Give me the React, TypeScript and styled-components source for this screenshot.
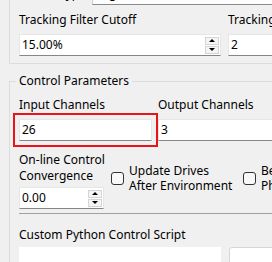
import styled, { createGlobalStyle } from 'styled-components';

const GlobalStyle = createGlobalStyle`
  html, body {
    margin: 0;
    padding: 0;
    background: #f0f0f0;
  }
  body {
    font-family: "Noto Sans", "Liberation Sans", sans-serif;
    font-size: 12px;
    line-height: 16px;
    color: #000;
  }
`;

const Page = styled.div`
  width: 272px;
  height: 262px;
  overflow: hidden;
  padding-left: 9px;
  box-sizing: border-box;
`;

const FilterGroup = styled.div`
  display: flow-root;
  width: 300px;
  height: 64px;
  box-sizing: border-box;
  border-left: 1px solid #dcdcdc;
  border-bottom: 1px solid #dcdcdc;
  padding-left: 9px;
`;

const ClippedRow = styled.div`
  display: flex;
  align-items: center;
  gap: 6px;
  height: 22px;
  margin-top: -17px;
`;

const RightLabel = styled.div`
  width: 67px;
  text-align: right;
  white-space: nowrap;
`;

const Combo = styled.div`
  flex: 1;
  height: 22px;
  box-sizing: border-box;
  background: #fdfdfd;
  border: 1px solid #d0d0d0;
  border-bottom-color: #8a8a8a;
  padding-left: 4px;
  display: flex;
  align-items: center;
`;

const FieldGrid = styled.div<{ $cols: string; $gap: number; $top: number }>`
  display: grid;
  grid-template-columns: ${(p) => p.$cols};
  column-gap: ${(p) => p.$gap}px;
  row-gap: 6px;
  margin-top: ${(p) => p.$top}px;
  white-space: nowrap;
`;

const Label = styled.div`
  height: 16px;
  white-space: nowrap;
`;

const Field = styled.div<{ $highlight?: boolean }>`
  height: 22px;
  box-sizing: border-box;
  background: #fff;
  border: 1px solid #e6e6e6;
  border-bottom-color: #868686;
  padding-left: 2px;
  display: flex;
  align-items: center;
  outline: ${(p) => (p.$highlight ? '2px solid #e8141c' : 'none')};
  outline-offset: 4px;
`;

const FieldText = styled.span`
  flex: 1;
`;

const SpinButtons = styled.div`
  display: flex;
  flex-direction: column;
  gap: 1px;
  margin-right: 1px;
`;

const SpinButton = styled.div`
  width: 14px;
  height: 8px;
  box-sizing: border-box;
  background: #f5f5f5;
  border: 1px solid #d4d4d4;
  display: flex;
  align-items: center;
  justify-content: center;
`;

const Arrow = styled.span<{ $down?: boolean }>`
  width: 0;
  height: 0;
  border-left: 3px solid transparent;
  border-right: 3px solid transparent;
  ${(p) => (p.$down ? 'border-top: 3px solid #000;' : 'border-bottom: 3px solid #000;')}
`;

const ParamGroup = styled.fieldset`
  width: 300px;
  margin: 9px 0 0;
  padding: 0 0 0 9px;
  border: 1px solid #dcdcdc;
  border-right: none;
  border-bottom: none;
  min-width: 0;
  box-sizing: border-box;
`;

const Legend = styled.legend`
  padding: 0 3px;
  margin-left: -3px;
  line-height: 16px;
`;

const ConvergenceRow = styled.div`
  display: grid;
  grid-template-columns: 85px 125px 1fr;
  column-gap: 7px;
  margin-top: 11px;
  white-space: nowrap;
`;

const Stack = styled.div`
  display: flex;
  flex-direction: column;
  gap: 3px;
`;

const CheckItem = styled.label`
  display: flex;
  align-items: center;
  gap: 5px;
  margin-top: 11px;
  align-self: start;
  line-height: 15px;
`;

const Box = styled.span`
  width: 13px;
  height: 13px;
  box-sizing: border-box;
  border: 1px solid #333;
  border-radius: 3px;
  background: #f8f8f8;
  flex: none;
`;

const ScriptSection = styled.div`
  margin-top: 4px;
  border-top: 1px solid #a0a0a0;
  padding-top: 13px;
`;

const ScriptAreas = styled.div`
  display: grid;
  grid-template-columns: 202px 1fr;
  column-gap: 8px;
  margin-top: 4px;
`;

const TextArea = styled.div<{ $framed?: boolean }>`
  height: 40px;
  background: #fff;
  box-sizing: border-box;
  border: ${(p) => (p.$framed ? '1px solid #d6d6d6' : 'none')};
  border-radius: ${(p) => (p.$framed ? '3px' : '0')};
`;

const SpinBox = ({ value }: { value: string }) => (
  <Field>
    <FieldText>{value}</FieldText>
    <SpinButtons>
      <SpinButton><Arrow /></SpinButton>
      <SpinButton><Arrow $down /></SpinButton>
    </SpinButtons>
  </Field>
);

export default function App() {
  return (
    <Page>
      <GlobalStyle />
      <FilterGroup>
        <ClippedRow>
          <RightLabel>Filter Type</RightLabel>
          <Combo>High Pass</Combo>
        </ClippedRow>
        <FieldGrid $cols="202px 1fr" $gap={7} $top={7}>
          <Label>Tracking Filter Cutoff</Label>
          <Label>Tracking Filter Order</Label>
          <SpinBox value="15.00%" />
          <Field><FieldText>2</FieldText></Field>
        </FieldGrid>
      </FilterGroup>
      <ParamGroup>
        <Legend>Control Parameters</Legend>
        <FieldGrid $cols="133px 1fr" $gap={6} $top={8}>
          <Label>Input Channels</Label>
          <Label>Output Channels</Label>
          <Field $highlight><FieldText>26</FieldText></Field>
          <Field><FieldText>3</FieldText></Field>
        </FieldGrid>
        <ConvergenceRow>
          <Stack>
            <div>On-line Control<br />Convergence</div>
            <SpinBox value="0.00" />
          </Stack>
          <CheckItem>
            <Box />
            <span>Update Drives<br />After Environment</span>
          </CheckItem>
          <CheckItem>
            <Box />
            <span>Before<br />Phase</span>
          </CheckItem>
        </ConvergenceRow>
        <ScriptSection>
          <Label>Custom Python Control Script</Label>
          <ScriptAreas>
            <TextArea />
            <TextArea $framed />
          </ScriptAreas>
        </ScriptSection>
      </ParamGroup>
    </Page>
  );
}
